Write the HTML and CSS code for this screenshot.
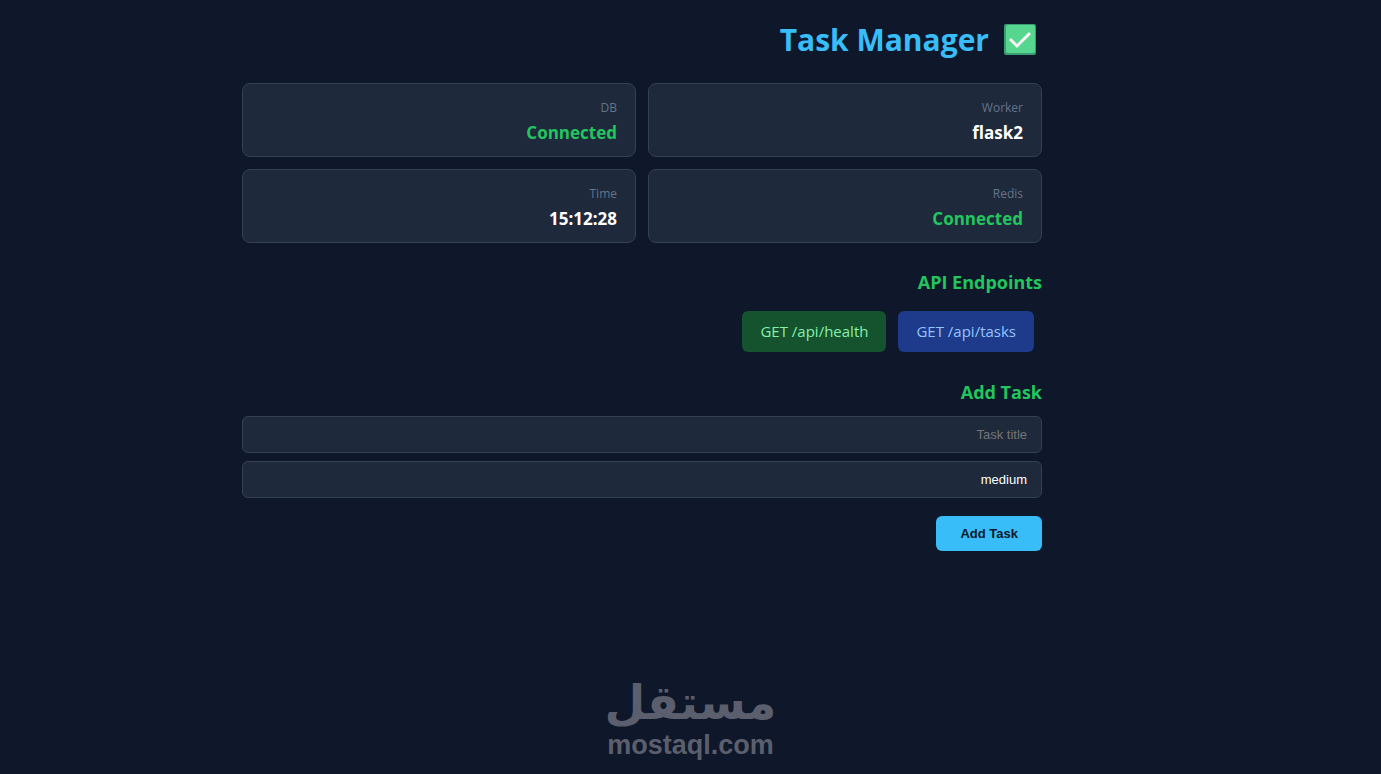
FILE: index.html
```html
<!DOCTYPE html>
<html lang="en" dir="rtl">
<head>
  <meta charset="UTF-8">
  <title>Task Manager</title>
  <meta name="viewport" content="width=device-width, initial-scale=1.0">
  <link rel="stylesheet" href="styles.css">
</head>
<body>
  <main class="container">
    <h1>
      <svg class="check" viewBox="0 0 32 32" aria-hidden="true">
        <rect width="32" height="31" rx="2" fill="#3a9d74"/>
        <rect x="2" y="1" width="29" height="28" rx="2" fill="#56d68f"/>
        <path d="M6 15l7 7L26 9" fill="none" stroke="#f4f4f4" stroke-width="3"/>
      </svg>
      <span>Task Manager</span>
    </h1>

    <div class="grid">
      <div class="card">
        <div class="label">Worker</div>
        <div class="value">flask2</div>
      </div>
      <div class="card">
        <div class="label">DB</div>
        <div class="value ok">Connected</div>
      </div>
      <div class="card">
        <div class="label">Redis</div>
        <div class="value ok">Connected</div>
      </div>
      <div class="card">
        <div class="label">Time</div>
        <div class="value">15:12:28</div>
      </div>
    </div>

    <h2>API Endpoints</h2>
    <div class="links">
      <a class="link tasks" href="/api/tasks">GET /api/tasks</a>
      <a class="link health" href="/api/health">GET /api/health</a>
    </div>

    <h2>Add Task</h2>
    <form>
      <input type="text" id="title" name="title" placeholder="Task title" aria-label="Task title">
      <select id="priority" name="priority" aria-label="Priority">
        <option value="low">low</option>
        <option value="medium" selected>medium</option>
        <option value="high">high</option>
      </select>
      <button type="submit">Add Task</button>
    </form>
  </main>

  <footer class="brand">
    <span class="brand-name" lang="ar">مستقل</span>
    <span class="brand-url">mostaql.com</span>
  </footer>
</body>
</html>
```

FILE: styles.css
```css
* {
  box-sizing: border-box;
}
body {
  font-family: "Open Sans", "Noto Sans", sans-serif;
  background: #0f172a;
  color: #fff;
  margin: 0;
  min-height: 100vh;
  display: flex;
  flex-direction: column;
}
.container {
  width: 100%;
  max-width: 897px;
  margin: 0 auto;
  padding: 18px 97px 20px 0;
}
h1 {
  display: flex;
  align-items: center;
  gap: 15px;
  margin: 0 0 21px;
  padding-right: 6px;
  font-size: 30px;
  line-height: 44px;
  color: #38bdf8;
}
.check {
  width: 32px;
  height: 32px;
}
.grid {
  display: grid;
  grid-template-columns: 1fr 1fr;
  gap: 12px;
}
.card {
  background: #1e293b;
  border: 1px solid #334155;
  border-radius: 8px;
  padding: 15px 18px 11px;
}
.label {
  font-size: 12px;
  line-height: 18px;
  color: #64748b;
}
.value {
  margin-top: 4px;
  font-size: 17px;
  line-height: 24px;
  font-weight: bold;
}
.ok {
  color: #22c55e;
}
h2 {
  margin: 26px 0 11px;
  font-size: 18px;
  line-height: 26px;
  color: #22c55e;
}
.links {
  display: flex;
  gap: 12px;
  padding: 5px 8px 1px 0;
}
.link {
  padding: 10px 18px;
  border-radius: 6px;
  font-size: 15px;
  line-height: 21px;
  text-decoration: none;
}
.tasks {
  background: #1e3a8a;
  color: #93c5fd;
}
.health {
  background: #14532d;
  color: #86efac;
}
input, select {
  display: block;
  width: 100%;
  height: 37px;
  margin-bottom: 8px;
  padding: 0 14px;
  background: #1e293b;
  border: 1px solid #334155;
  border-radius: 6px;
  color: #fff;
  font: 13px "Liberation Sans", Arial, sans-serif;
  appearance: none;
}
input::placeholder {
  color: #757575;
}
button {
  margin-top: 10px;
  padding: 10px 24px;
  background: #38bdf8;
  color: #0f172a;
  border: none;
  border-radius: 6px;
  font: bold 13px/15px "Liberation Sans", Arial, sans-serif;
  cursor: pointer;
}
.brand {
  display: flex;
  flex-direction: column;
  align-items: center;
  margin-top: auto;
  padding-bottom: 14px;
  color: #5b5f6d;
  font-weight: bold;
}
.brand-name {
  font-family: "DejaVu Sans", sans-serif;
  font-size: 47px;
  line-height: 55px;
}
.brand-url {
  font-family: "Liberation Sans", Arial, sans-serif;
  font-size: 27px;
  line-height: 30px;
}
```
